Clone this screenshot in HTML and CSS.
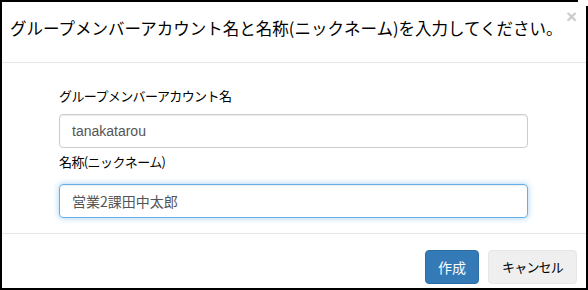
FILE: index.html
```html
<!DOCTYPE html>
<html lang="ja">
<head>
<meta charset="utf-8">
<title>グループメンバー</title>
<link rel="stylesheet" href="styles.css">
</head>
<body>
<div class="modal">
  <span class="notch"></span>
  <button class="close" type="button">&times;</button>
  <div class="modal-header">
    <h4 class="modal-title">グループメンバーアカウント名と名称(ニックネーム)を入力してください。</h4>
  </div>
  <div class="modal-body">
    <label class="label label-first">グループメンバーアカウント名</label>
    <div class="input">tanakatarou</div>
    <label class="label label-second">名称(ニックネーム)</label>
    <div class="input input-focus">営業2課田中太郎</div>
  </div>
  <div class="modal-footer">
    <button class="btn btn-primary" type="button">作成</button>
    <button class="btn btn-default" type="button">キャンセル</button>
  </div>
</div>
</body>
</html>
```
FILE: styles.css
```css
html, body {
  margin: 0;
  padding: 0;
  background: #fff;
}
body {
  font-family: "Noto Sans CJK JP", "Liberation Sans", sans-serif;
  color: #333;
}
.modal {
  position: relative;
  width: 588px;
  height: 290px;
  box-sizing: border-box;
  border: 2px solid #000;
  background: #fff;
  display: flex;
  flex-direction: column;
}
.notch {
  position: absolute;
  top: -2px;
  right: -2px;
  width: 10px;
  height: 6px;
  background: #fff;
}
.close {
  position: absolute;
  top: 5px;
  right: 9px;
  border: 0;
  background: transparent;
  padding: 0;
  font-family: "Liberation Sans", sans-serif;
  font-size: 19px;
  font-weight: bold;
  line-height: 20px;
  color: #000;
  opacity: 0.2;
}
.modal-header {
  height: 61px;
  box-sizing: border-box;
  border-bottom: 1px solid #e5e5e5;
  padding: 14px 8px 0;
  flex: none;
}
.modal-title {
  margin: 0;
  font-size: 16.5px;
  font-weight: normal;
  line-height: 24px;
  letter-spacing: 0;
  color: #000;
  white-space: nowrap;
}
.modal-body {
  height: 171px;
  box-sizing: border-box;
  border-bottom: 1px solid #e5e5e5;
  padding: 23px 0 0 57px;
  display: flex;
  flex-direction: column;
  flex: none;
}
.label {
  display: block;
  font-size: 13px;
  line-height: 20px;
  letter-spacing: -0.6px;
  color: #000;
}
.label-first {
  margin-bottom: 8px;
}
.label-second {
  margin-top: 4px;
  margin-bottom: 12px;
}
.input {
  width: 469px;
  height: 34px;
  box-sizing: border-box;
  border: 1px solid #ccc;
  border-radius: 4px;
  padding: 0 12px;
  font-family: "Liberation Sans", "Noto Sans CJK JP", sans-serif;
  font-size: 14px;
  line-height: 32px;
  color: #555;
  box-shadow: inset 0 1px 1px rgba(0, 0, 0, 0.075);
}
.input-focus {
  border-color: #66afe9;
  box-shadow: inset 0 1px 1px rgba(0, 0, 0, 0.075), 0 0 6px rgba(102, 175, 233, 0.6);
  font-family: "Noto Sans CJK JP", "Liberation Sans", sans-serif;
}
.modal-footer {
  flex: 1;
  display: flex;
  justify-content: flex-end;
  align-items: flex-start;
  gap: 9px;
  padding: 16px 9px 0 0;
}
.btn {
  height: 34px;
  box-sizing: border-box;
  border-radius: 4px;
  font-family: "Noto Sans CJK JP", sans-serif;
  line-height: 20px;
  padding: 0;
  margin: 0;
}
.btn-primary {
  width: 54px;
  background: #337ab7;
  border: 1px solid #2e6da4;
  color: #fff;
  font-size: 14px;
}
.btn-default {
  width: 89px;
  background: #efefef;
  border: 1px solid #e6e6e6;
  color: #000;
  font-size: 13px;
  letter-spacing: -0.8px;
}
```
